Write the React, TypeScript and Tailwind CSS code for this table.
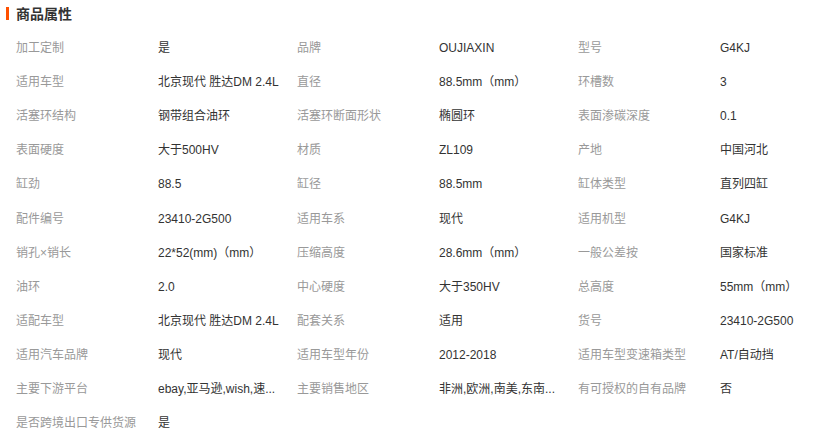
import React from "react";

const items: [string, string][] = [
  ["加工定制", "是"],
  ["品牌", "OUJIAXIN"],
  ["型号", "G4KJ"],
  ["适用车型", "北京现代 胜达DM 2.4L"],
  ["直径", "88.5mm（mm）"],
  ["环槽数", "3"],
  ["活塞环结构", "钢带组合油环"],
  ["活塞环断面形状", "椭圆环"],
  ["表面渗碳深度", "0.1"],
  ["表面硬度", "大于500HV"],
  ["材质", "ZL109"],
  ["产地", "中国河北"],
  ["缸劲", "88.5"],
  ["缸径", "88.5mm"],
  ["缸体类型", "直列四缸"],
  ["配件编号", "23410-2G500"],
  ["适用车系", "现代"],
  ["适用机型", "G4KJ"],
  ["销孔×销长", "22*52(mm)（mm）"],
  ["压缩高度", "28.6mm（mm）"],
  ["一般公差按", "国家标准"],
  ["油环", "2.0"],
  ["中心硬度", "大于350HV"],
  ["总高度", "55mm（mm）"],
  ["适配车型", "北京现代 胜达DM 2.4L"],
  ["配套关系", "适用"],
  ["货号", "23410-2G500"],
  ["适用汽车品牌", "现代"],
  ["适用车型年份", "2012-2018"],
  ["适用车型变速箱类型", "AT/自动挡"],
  ["主要下游平台", "ebay,亚马逊,wish,速..."],
  ["主要销售地区", "非洲,欧洲,南美,东南..."],
  ["有可授权的自有品牌", "否"],
  ["是否跨境出口专供货源", "是"],
];

export default function App() {
  return (
    <div
      className="w-[821px] h-[434px] overflow-hidden bg-white"
      style={{ fontFamily: '"Liberation Sans", "Noto Sans CJK SC", sans-serif' }}
    >
      <div className="flex items-center h-[26px] pl-[6px] pt-[1px]">
        <div className="w-[3px] h-[13px] bg-[#ff5000]" />
        <div className="ml-[7px] text-[14px] font-bold text-[#333] leading-none">商品属性</div>
      </div>
      <div className="flex flex-wrap w-[860px] pl-[16px] pt-[5px]">
        {items.map(([k, v], i) => (
          <div key={i} className="flex h-[34.1px] items-center w-[281px] text-[12px] leading-none">
            <div className="w-[142px] shrink-0 text-[#999] whitespace-nowrap">{k}</div>
            <div className="w-[139px] shrink-0 text-[#333] whitespace-nowrap">{v}</div>
          </div>
        ))}
      </div>
    </div>
  );
}
